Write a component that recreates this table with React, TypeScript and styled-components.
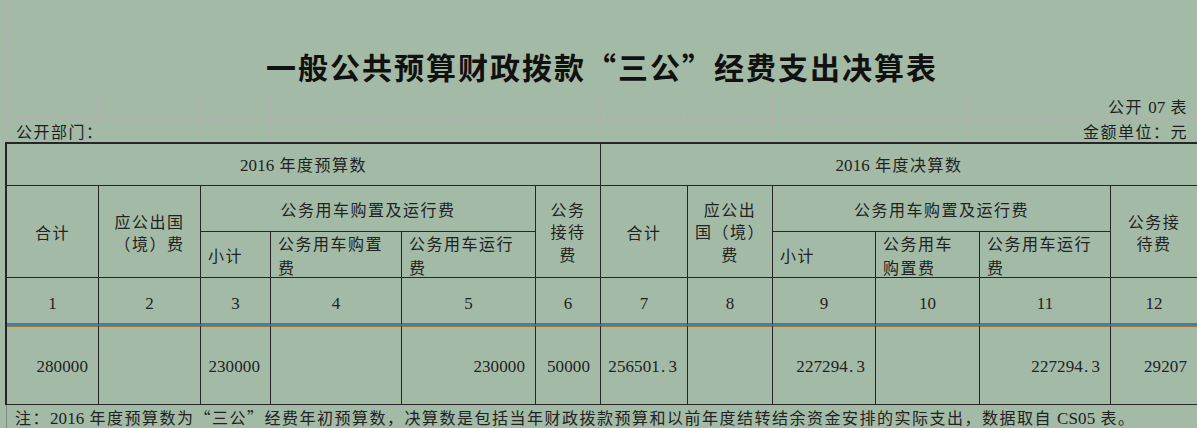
import React from "react";
import styled, { createGlobalStyle } from "styled-components";

const BG = "#a3bba6";
const GRID = "#b5acb0";
const LINE = "#262626";
const TEXT = "#1e1e1e";

const GlobalStyle = createGlobalStyle`
  html, body {
    margin: 0;
    padding: 0;
    background: ${BG};
    overflow: hidden;
  }
  body {
    font-family: "Noto Sans CJK SC", "Noto Sans", sans-serif;
    color: ${TEXT};
  }
`;

const Sheet = styled.div`
  width: 1191px;
  margin-left: 6px;
  display: flex;
  flex-direction: column;
`;

const TitleRow = styled.div`
  height: 93px;
  box-sizing: content-box;
  border-left: 1px dashed ${GRID};
  border-bottom: 1px dashed ${GRID};
  display: flex;
  justify-content: center;
  align-items: flex-end;
`;

const Title = styled.h1`
  margin: 0 0 12px 0;
  font-size: 30px;
  line-height: 30px;
  font-weight: 700;
  letter-spacing: 2px;
  color: #111;
  white-space: nowrap;
`;

const MetaRow = styled.div<{ $h: number; $ruled?: boolean }>`
  display: grid;
  grid-template-columns: 92px 102px 70px 265px 65px 87px 85px 103px 93px 71px 158px;
  height: ${(p) => p.$h}px;
  border-left: 1px dashed ${GRID};
  border-bottom: ${(p) => (p.$ruled ? `1px dashed ${GRID}` : "none")};
  box-sizing: border-box;
`;

const MetaCell = styled.div<{ $span?: number; $align?: "left" | "right" }>`
  grid-column: span ${(p) => p.$span ?? 1};
  border-right: 1px dashed ${GRID};
  display: flex;
  align-items: center;
  justify-content: ${(p) => (p.$align === "right" ? "flex-end" : "flex-start")};
  padding: ${(p) => (p.$align === "right" ? "0 9px 0 0" : "0 0 0 9px")};
  font-size: 16px;
  letter-spacing: 1.5px;
  white-space: nowrap;
  box-sizing: border-box;
`;

const Table = styled.div`
  display: grid;
  grid-template-columns: 92px 102px 70px 131px 134px 65px 87px 85px 103px 104px 131px 87px;
  grid-template-rows: 42px 46px 46px 47px 80px;
  margin-left: -1px;
  border-top: 2px solid ${LINE};
  border-left: 2px solid ${LINE};
`;

type Align = "left" | "center" | "right";

const Cell = styled.div<{
  $col: string;
  $row: string;
  $align?: Align;
  $lh?: number;
  $pt?: number;
  $kind?: "head" | "index" | "data";
}>`
  grid-column: ${(p) => p.$col};
  grid-row: ${(p) => p.$row};
  box-sizing: border-box;
  display: flex;
  align-items: center;
  justify-content: ${(p) =>
    p.$align === "left" ? "flex-start" : p.$align === "right" ? "flex-end" : "center"};
  text-align: ${(p) => p.$align ?? "center"};
  padding: ${(p) => p.$pt ?? 0}px ${(p) => (p.$align === "right" ? 10 : 8)}px 0
    ${(p) => (p.$align === "left" ? 7 : 8)}px;
  border-right: 1px solid ${LINE};
  border-bottom: ${(p) =>
    p.$kind === "index" ? "2px solid #2d84b8" : `1px solid ${LINE}`};
  border-top: ${(p) => (p.$kind === "data" ? "2px solid #a86d27" : "none")};
  font-size: 16px;
  letter-spacing: 1.5px;
  line-height: ${(p) => p.$lh ?? 22}px;
  white-space: nowrap;
  color: #222;
`;

const Label = styled.div`
  text-align: inherit;
`;

const Num = styled.span`
  font-family: "Liberation Serif", "Times New Roman", serif;
  font-size: 17px;
  letter-spacing: 0.1px;
`;

const Dot = styled.span`
  display: inline-block;
  width: 8.5px;
  text-align: left;
  padding-left: 1px;
  box-sizing: border-box;
`;

const NoteRow = styled.div`
  height: 24px;
  border-left: 1px solid #7f8c81;
  padding-left: 8px;
  display: flex;
  align-items: center;
  font-size: 16px;
  letter-spacing: 1.5px;
  white-space: nowrap;
  color: #222;
`;

const N: React.FC<{ v: string }> = ({ v }) => {
  const i = v.indexOf(".");
  if (i < 0) return <Num>{v}</Num>;
  return (
    <Num>
      {v.slice(0, i)}
      <Dot>.</Dot>
      {v.slice(i + 1)}
    </Num>
  );
};

const dataValues = [
  "280000",
  "",
  "230000",
  "",
  "230000",
  "50000",
  "256501.3",
  "",
  "227294.3",
  "",
  "227294.3",
  "29207",
];

export default function App() {
  return (
    <>
      <GlobalStyle />
      <Sheet>
        <TitleRow>
          <Title>一般公共预算财政拨款“三公”经费支出决算表</Title>
        </TitleRow>

        <MetaRow $h={25} $ruled>
          {Array.from({ length: 10 }).map((_, i) => (
            <MetaCell key={i} />
          ))}
          <MetaCell $align="right">
            <span>
              公开 <N v="07" /> 表
            </span>
          </MetaCell>
        </MetaRow>
        <MetaRow $h={23}>
          <MetaCell $span={2}>
            <span>公开部门：</span>
          </MetaCell>
          {Array.from({ length: 8 }).map((_, i) => (
            <MetaCell key={i} />
          ))}
          <MetaCell $align="right">
            <span>金额单位：元</span>
          </MetaCell>
        </MetaRow>

        <Table>
          <Cell $col="1 / 7" $row="1">
            <Label>
              <N v="2016" /> 年度预算数
            </Label>
          </Cell>
          <Cell $col="7 / 13" $row="1">
            <Label>
              <N v="2016" /> 年度决算数
            </Label>
          </Cell>

          <Cell $col="1" $row="2 / 4">
            <Label>合计</Label>
          </Cell>
          <Cell $col="2" $row="2 / 4">
            <Label>
              应公出国
              <br />
              （境）费
            </Label>
          </Cell>
          <Cell $col="3 / 6" $row="2">
            <Label>公务用车购置及运行费</Label>
          </Cell>
          <Cell $col="6" $row="2 / 4" $lh={22.5}>
            <Label>
              公务
              <br />
              接待
              <br />
              费
            </Label>
          </Cell>
          <Cell $col="7" $row="2 / 4">
            <Label>合计</Label>
          </Cell>
          <Cell $col="8" $row="2 / 4" $lh={22.5}>
            <Label>
              应公出
              <br />
              国（境）
              <br />
              费
            </Label>
          </Cell>
          <Cell $col="9 / 12" $row="2">
            <Label>公务用车购置及运行费</Label>
          </Cell>
          <Cell $col="12" $row="2 / 4">
            <Label>
              公务接
              <br />
              待费
            </Label>
          </Cell>

          <Cell $col="3" $row="3" $align="left">
            <Label>小计</Label>
          </Cell>
          <Cell $col="4" $row="3" $align="left" $lh={24}>
            <Label>
              公务用车购置
              <br />
              费
            </Label>
          </Cell>
          <Cell $col="5" $row="3" $align="left" $lh={24}>
            <Label>
              公务用车运行
              <br />
              费
            </Label>
          </Cell>
          <Cell $col="9" $row="3" $align="left">
            <Label>小计</Label>
          </Cell>
          <Cell $col="10" $row="3" $align="left" $lh={24}>
            <Label>
              公务用车
              <br />
              购置费
            </Label>
          </Cell>
          <Cell $col="11" $row="3" $align="left" $lh={24}>
            <Label>
              公务用车运行
              <br />
              费
            </Label>
          </Cell>

          {Array.from({ length: 12 }).map((_, i) => (
            <Cell key={`idx${i}`} $col={`${i + 1}`} $row="4" $kind="index" $pt={4}>
              <Label>
                <N v={`${i + 1}`} />
              </Label>
            </Cell>
          ))}

          {dataValues.map((v, i) => (
            <Cell key={`d${i}`} $col={`${i + 1}`} $row="5" $kind="data" $align="right">
              <Label>{v ? <N v={v} /> : null}</Label>
            </Cell>
          ))}
        </Table>

        <NoteRow>
          <span>
            注：<N v="2016" /> 年度预算数为“三公”经费年初预算数，决算数是包括当年财政拨款预算和以前年度结转结余资金安排的实际支出，数据取自 <N v="CS05" /> 表。
          </span>
        </NoteRow>
      </Sheet>
    </>
  );
}
